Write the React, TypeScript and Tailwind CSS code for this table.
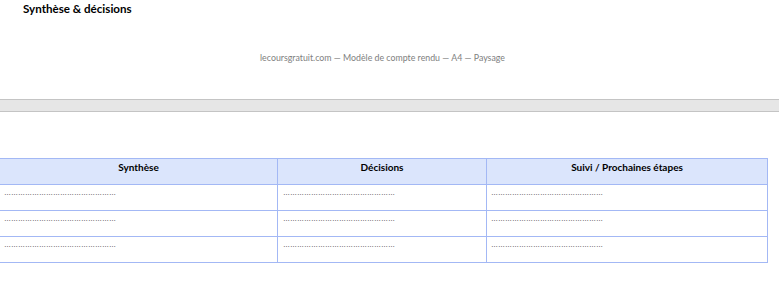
import React from "react";

const dots = "…".repeat(16);

export default function App() {
  const rows = [0, 1, 2];
  const dotStyle = { fontFamily: "'Liberation Sans', Arial, sans-serif" };
  return (
    <div className="w-[779px] h-[298px] bg-white overflow-hidden" style={{ fontFamily: "Lato, 'Open Sans', sans-serif" }}>
      <div className="pl-[23px] pt-[1px] h-[16px] text-[11.6px] leading-[16px] font-bold text-black">Synthèse &amp; décisions</div>
      <div className="w-[765px] mt-[35px] text-center text-[8.8px] leading-[14px] text-[#808080]">
        lecoursgratuit.com — Modèle de compte rendu — A4 — Paysage
      </div>
      <div className="mt-[34px] h-[13px] border-y border-[#c4c4c4] bg-[#e6e6e6]" />
      <div className="mt-[46px] w-[768px] border-t border-r border-[#a3b8f5]">
        <div className="flex h-[26px] bg-[#dbe5fc] border-b border-[#a3b8f5] text-[10px] font-bold text-black leading-[14px]">
          <div className="w-[278px] border-r border-[#a3b8f5] text-center pt-[1px]">Synthèse</div>
          <div className="w-[209px] border-r border-[#a3b8f5] text-center pt-[1px]">Décisions</div>
          <div className="flex-1 text-center pt-[1px]">Suivi / Prochaines étapes</div>
        </div>
        {rows.map((r) => (
          <div key={r} className="flex h-[26px] border-b border-[#a3b8f5] text-[7px] leading-[12px] text-black">
            <div className="w-[278px] border-r border-[#a3b8f5] pl-[4px] pt-[2px] overflow-hidden whitespace-nowrap" style={dotStyle}>{dots}</div>
            <div className="w-[209px] border-r border-[#a3b8f5] pl-[5px] pt-[2px] overflow-hidden whitespace-nowrap" style={dotStyle}>{dots}</div>
            <div className="flex-1 pl-[4px] pt-[2px] overflow-hidden whitespace-nowrap" style={dotStyle}>{dots}</div>
          </div>
        ))}
      </div>
    </div>
  );
}
